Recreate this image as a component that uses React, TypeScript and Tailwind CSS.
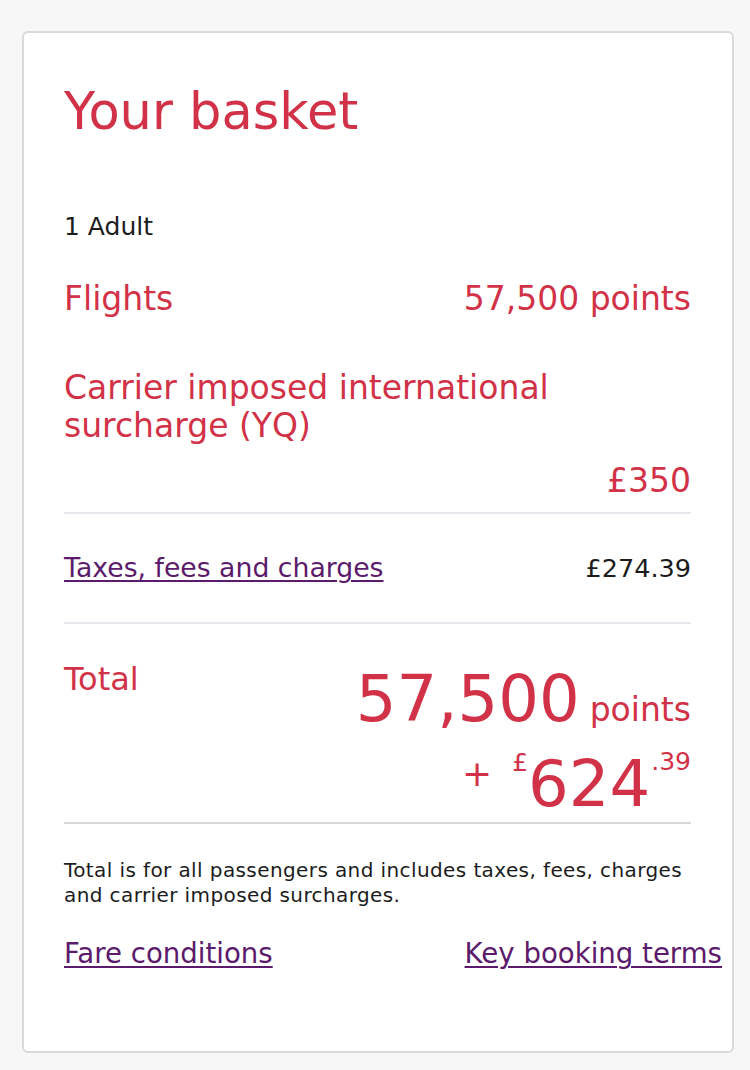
import React from "react";

const red = "text-[#d23247]";
const purple = "text-[#5b1a6b]";
const link = "underline underline-offset-[3px] decoration-[2px]";

export default function App() {
  return (
    <div
      className="min-h-[1070px] bg-[#f7f7f7] px-[22px] pt-[31px] pb-[17px]"
      style={{ fontFamily: '"DejaVu Sans", "Noto Sans", sans-serif' }}
    >
      <div className="w-[712px] h-[1022px] rounded-[6px] border-2 border-[#dadada] bg-white pl-[40px] pr-[41px] pt-[51px]">
        <h1 className={`${red} text-[51px] leading-[56px] font-normal`}>Your basket</h1>

        <p className="mt-[71px] text-[25px] leading-[32px] text-[#1c1c1c]">1 Adult</p>

        {/* flights */}
        <div className={`${red} mt-[36px] flex justify-between text-[33px] leading-[40px]`}>
          <span>Flights</span>
          <span>57,500 points</span>
        </div>

        {/* surcharge */}
        <div className={`${red} mt-[50px] text-[33px] leading-[38px]`}>
          <p className="pr-[60px]">Carrier imposed international surcharge (YQ)</p>
          <p className="mt-[17px] text-right">£350</p>
        </div>

        <div className="mt-[12px] h-[2px] bg-[#e6e8ee]" />

        <div className="flex items-center justify-between h-[108px]">
          <a href="#" className={`${purple} ${link} text-[26.7px] leading-[36px]`}>
            Taxes, fees and charges
          </a>
          <span className="text-[25.5px] leading-[36px] text-[#1c1c1c]">£274.39</span>
        </div>

        <div className="h-[2px] bg-[#e6e8ee]" />

        {/* total */}
        <div className={`${red} flex justify-between items-start pt-[35px]`}>
          <span className="text-[32px] leading-[40px]">Total</span>
          <div className="mt-[4px] flex flex-col items-end">
            <div className="flex items-baseline h-[72px]">
              <span className="text-[64px] leading-[72px]">57,500</span>
              <span className="ml-[10px] text-[33px] leading-[40px]">points</span>
            </div>
            <div className="mt-[13px] flex items-start h-[72px]">
              <span className="mt-[8px] mr-[20px] text-[36px] leading-[36px]">+</span>
              <span className="mt-[2px] text-[25px] leading-[25px]">£</span>
              <span className="text-[64px] leading-[72px]">624</span>
              <span className="mt-[1px] ml-[1px] text-[25px] leading-[25px]">.39</span>
            </div>
          </div>
        </div>

        <div className="mt-[2px] h-[2px] bg-[#d8d8d8]" />

        <p className="mt-[34px] text-[20px] leading-[25px] tracking-[0.4px] text-[#1c1c1c]">
          Total is for all passengers and includes taxes, fees, charges and carrier imposed surcharges.
        </p>

        <div className="mt-[28px] mr-[-31px] flex justify-between">
          <a href="#" className={`${purple} ${link} text-[27.6px] leading-[36px]`}>
            Fare conditions
          </a>
          <a href="#" className={`${purple} ${link} text-[27.6px] leading-[36px]`}>
            Key booking terms
          </a>
        </div>
      </div>
    </div>
  );
}
